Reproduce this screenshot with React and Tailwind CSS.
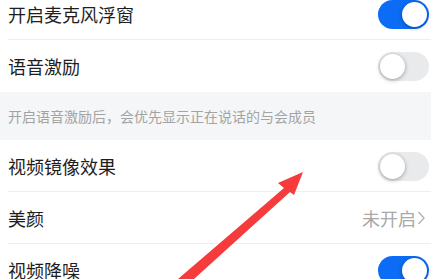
import React from 'react';

const Toggle = ({ on }) => (
  <div
    className={`relative w-[51px] h-[29px] rounded-full ${
      on ? 'bg-[#0c6cf6]' : 'bg-[#e9eaec]'
    }`}
  >
    <div
      className={`absolute top-[2px] w-[25px] h-[25px] rounded-full bg-white shadow-[0_1px_4px_rgba(0,0,0,0.35)] ${
        on ? 'right-[2px]' : 'left-[2px]'
      }`}
    />
  </div>
);

const Row = ({ label, children, divider = true, className = '' }) => (
  <div className={`relative flex items-center justify-between h-[52px] pl-[8px] pr-[2px] bg-white ${className}`}>
    <span className="text-[18px] text-[#1e1e1e]">{label}</span>
    {children}
    {divider && <div className="absolute left-[8px] right-0 bottom-0 h-px bg-[#efefef]" />}
  </div>
);

export default function App() {
  return (
    <div
      className="relative w-[431px] h-[279px] overflow-hidden bg-white"
      style={{ fontFamily: '"Noto Sans CJK SC", "Noto Sans", sans-serif' }}
    >
      <Row label="开启麦克风浮窗" className="-mt-[12px]">
        <Toggle on />
      </Row>
      <Row label="语音激励" divider={false}>
        <Toggle />
      </Row>
      <div className="h-[48px] bg-[#f5f6f7] flex items-center pl-[8px]">
        <span className="text-[14px] text-[#a3a3a3]">开启语音激励后，会优先显示正在说话的与会成员</span>
      </div>
      <Row label="视频镜像效果">
        <Toggle />
      </Row>
      <Row label="美颜">
        <span className="text-[18px] text-[#a9a9a9] flex items-center pr-[3px]">
          未开启
          <svg width="9" height="16" viewBox="0 0 9 16" className="ml-[1px]">
            <path d="M1.5 2 L7 8 L1.5 14" fill="none" stroke="#b3b3b3" strokeWidth="1.4" />
          </svg>
        </span>
      </Row>
      <Row label="视频降噪" divider={false}>
        <Toggle on />
      </Row>

      <svg className="absolute left-0 top-0 pointer-events-none" width="431" height="279" viewBox="0 0 431 279">
        <polygon
          points="303,172 278,183 284,188 178,279 194,279 290,192 294,195"
          fill="#f53b3b"
        />
      </svg>
    </div>
  );
}
